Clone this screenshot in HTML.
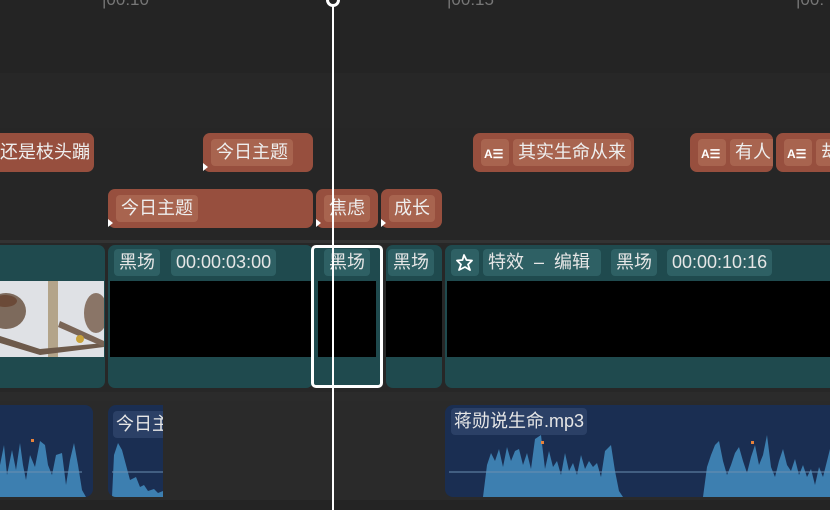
<!DOCTYPE html>
<html style="overflow:hidden;width:830px;height:510px"><head><meta charset="utf-8"><style>
body{margin:0;width:830px;height:510px;background:#242424;overflow:hidden;font-family:"Liberation Sans","Noto Sans CJK SC",sans-serif}
#w{position:relative;width:830px;height:510px;overflow:hidden;background:#242424}
#w div{position:absolute;box-sizing:border-box}
.band{left:0;width:830px}
.tc{background:#974f3e;border-radius:7px;height:39px}
.chip{background:#a8644f;color:#eee;font-size:18px;line-height:27px;height:27px;top:6px;border-radius:4px;padding:0 5px;white-space:nowrap;overflow:hidden}
.vc{background:#1f4a4e;border-radius:7px;top:245px;height:143px;overflow:hidden}
.vchip{background:#2e6064;color:#e6e6e6;font-size:18px;line-height:27px;height:27px;top:4px;border-radius:4px;padding:0 5px;white-space:nowrap}
.blk{background:#000;top:36px;height:76px}
.ac{background:#1a2e52;border-radius:8px;top:405px;height:92px;overflow:hidden}
.ai{font-size:12px;line-height:12px;font-weight:bold;color:#fff}
.tri{width:0;height:0;border-top:4px solid transparent;border-bottom:4px solid transparent;border-left:5px solid #fff}
.rl{color:#777;font-size:17px;white-space:nowrap;top:-10px}
</style></head><body><div id="w">
<div class="band" style="top:73px;height:55px;background:#272727"></div>
<div class="band" style="top:128px;height:56px;background:#262626"></div>
<div class="band" style="top:184px;height:56px;background:#262626"></div>
<div class="band" style="top:240px;height:3px;background:#333"></div>
<div class="band" style="top:243px;height:149px;background:#272727"></div>
<div class="band" style="top:392px;height:9px;background:#2b2b2b"></div>
<div class="band" style="top:401px;height:99px;background:#2a2a2a"></div>

<div class="rl" style="left:102px">|00:10</div>
<div class="rl" style="left:447px">|00:15</div>
<div class="rl" style="left:796px;width:34px;overflow:hidden">|00:</div>

<div class="tc" style="left:-10px;top:133px;width:104px;overflow:hidden"><div class="chip" style="left:10px;top:6px;background:none;padding:0">还是枝头蹦</div></div>
<div class="tc" style="left:203px;top:133px;width:110px"><div class="chip" style="left:8px">今日主题</div><div class="tri" style="left:0;top:30px"></div></div>
<div class="tc" style="left:473px;top:133px;width:161px;overflow:hidden"><div class="chip" style="left:8px;width:28px;padding:0 3px"><span class="ai">A☰</span></div><div class="chip" style="left:40px">其实生命从来</div></div>
<div class="tc" style="left:690px;top:133px;width:83px;overflow:hidden"><div class="chip" style="left:8px;width:28px;padding:0 3px"><span class="ai">A☰</span></div><div class="chip" style="left:40px">有人</div></div>
<div class="tc" style="left:776px;top:133px;width:54px;overflow:hidden;border-radius:7px 0 0 7px"><div class="chip" style="left:8px;width:28px;padding:0 3px"><span class="ai">A☰</span></div><div class="chip" style="left:40px">却</div></div>
<div class="tc" style="left:108px;top:189px;width:205px"><div class="chip" style="left:8px">今日主题</div><div class="tri" style="left:0;top:30px"></div></div>
<div class="tc" style="left:316px;top:189px;width:62px"><div class="chip" style="left:8px">焦虑</div><div class="tri" style="left:0;top:30px"></div></div>
<div class="tc" style="left:381px;top:189px;width:61px"><div class="chip" style="left:8px">成长</div><div class="tri" style="left:0;top:30px"></div></div>

<div class="vc" style="left:-10px;width:115px"><div style="left:10px;top:36px;width:104px;height:76px;background:#dfe1e5;overflow:hidden">
<svg width="104" height="76"><rect x="48" y="0" width="10" height="76" fill="#b3a48a"/><ellipse cx="6" cy="30" rx="20" ry="18" fill="#7d6a5c"/><ellipse cx="5" cy="20" rx="12" ry="6" fill="#6b4a38"/><path d="M0 55 L40 68 L104 62 L104 66 L40 74 L0 62Z" fill="#6d5a4b"/><ellipse cx="96" cy="32" rx="12" ry="20" fill="#8a7567"/><path d="M60 40 L104 60 L104 66 L58 46Z" fill="#7a6556"/><circle cx="80" cy="58" r="4" fill="#c9a23a"/></svg></div></div>
<div class="vc" style="left:108px;width:205px"><div class="vchip" style="left:6px">黑场</div><div class="vchip" style="left:63px">00:00:03:00</div><div class="blk" style="left:2px;width:203px"></div></div>
<div class="vc" style="left:311px;width:72px;border:3px solid #fff;border-radius:5px;background:#1f4a4e"><div class="vchip" style="left:10px;top:1px">黑场</div><div class="blk" style="left:4px;top:33px;width:58px"></div></div>
<div class="vc" style="left:386px;width:56px"><div class="vchip" style="left:2px">黑场</div><div class="blk" style="left:0;width:56px"></div></div>
<div class="vc" style="left:445px;width:385px;border-radius:7px 0 0 7px"><div class="vchip" style="left:6px;width:28px;padding:0 4px"><svg width="20" height="27" viewBox="0 0 20 27"><path d="M9 6 L11.5 11 L17 11.5 L13 15.5 L15 21 L10 18 L4 21 L6 15.5 L2 11.5 L7.5 11Z" fill="none" stroke="#fff" stroke-width="1.8" stroke-linejoin="round"/></svg></div><div class="vchip" style="left:38px;width:118px">特效 &nbsp;–&nbsp; 编辑</div><div class="vchip" style="left:166px">黑场</div><div class="vchip" style="left:222px">00:00:10:16</div><div class="blk" style="left:2px;width:400px"></div></div>

<div class="ac" style="left:-10px;width:103px"><svg width="103" height="92" style="position:absolute;left:0;top:0"><path d="M0 92 L10 60 L14 40 L17 70 L22 45 L26 65 L30 38 L33 60 L36 75 L40 50 L45 62 L50 36 L55 40 L58 60 L62 70 L66 50 L72 48 L76 80 L80 55 L84 38 L88 60 L92 85 L96 92Z" fill="#3d7fb0"/><line x1="0" y1="67" x2="92" y2="67" stroke="#6a8fb0" stroke-width="1"/><rect x="41" y="34" width="3" height="3" fill="#e8823a"/></svg></div>
<div class="ac" style="left:108px;width:55px;border-radius:8px 0 0 8px"><svg width="55" height="92" style="position:absolute;left:0;top:0"><path d="M4 92 L6 50 L10 38 L14 45 L18 60 L22 75 L28 72 L32 82 L36 80 L40 86 L46 84 L50 88 L55 86 L55 92Z" fill="#3d7fb0"/><line x1="4" y1="67" x2="55" y2="67" stroke="#6a8fb0"/></svg><div style="left:5px;top:6px;background:#2b4066;color:#e6e6e6;font-size:18px;line-height:27px;height:27px;padding:0 3px;border-radius:4px;white-space:nowrap">今日主</div></div>
<div class="ac" style="left:445px;width:385px;border-radius:8px 0 0 8px"><svg width="400" height="92" style="position:absolute;left:0;top:0"><path d="M38 92 L42 60 L46 48 L50 56 L54 44 L58 62 L62 42 L66 56 L70 46 L74 44 L78 60 L82 48 L86 64 L90 34 L96 30 L100 64 L104 46 L108 62 L112 56 L116 70 L120 48 L124 66 L128 58 L132 70 L136 50 L140 64 L144 56 L148 62 L152 58 L156 72 L160 46 L166 40 L170 66 L174 86 L178 92 Z M258 92 L262 62 L266 50 L270 40 L274 36 L278 56 L282 70 L286 60 L290 48 L294 42 L298 56 L302 68 L306 52 L310 40 L314 60 L318 50 L322 30 L326 62 L330 72 L334 56 L338 44 L342 60 L346 66 L350 54 L354 70 L358 60 L362 72 L366 64 L370 80 L374 62 L378 72 L382 56 L386 40 L390 60 L400 50 L400 92Z" fill="#3d7fb0"/><line x1="4" y1="67" x2="400" y2="67" stroke="#6a8fb0"/><rect x="96" y="36" width="3" height="3" fill="#e8823a"/><rect x="306" y="36" width="3" height="3" fill="#e8823a"/></svg><div style="left:6px;top:3px;background:#2b4066;color:#e6e6e6;font-size:18px;line-height:27px;height:27px;padding:0 3px;border-radius:4px;white-space:nowrap">蒋勋说生命.mp3</div></div>

<div style="left:332px;top:0;width:2px;height:510px;background:#fff"></div>
<div style="left:326px;top:-7px;width:14px;height:14px;border:3px solid #fff;border-radius:50%;background:#242424"></div>
</div></body></html>
